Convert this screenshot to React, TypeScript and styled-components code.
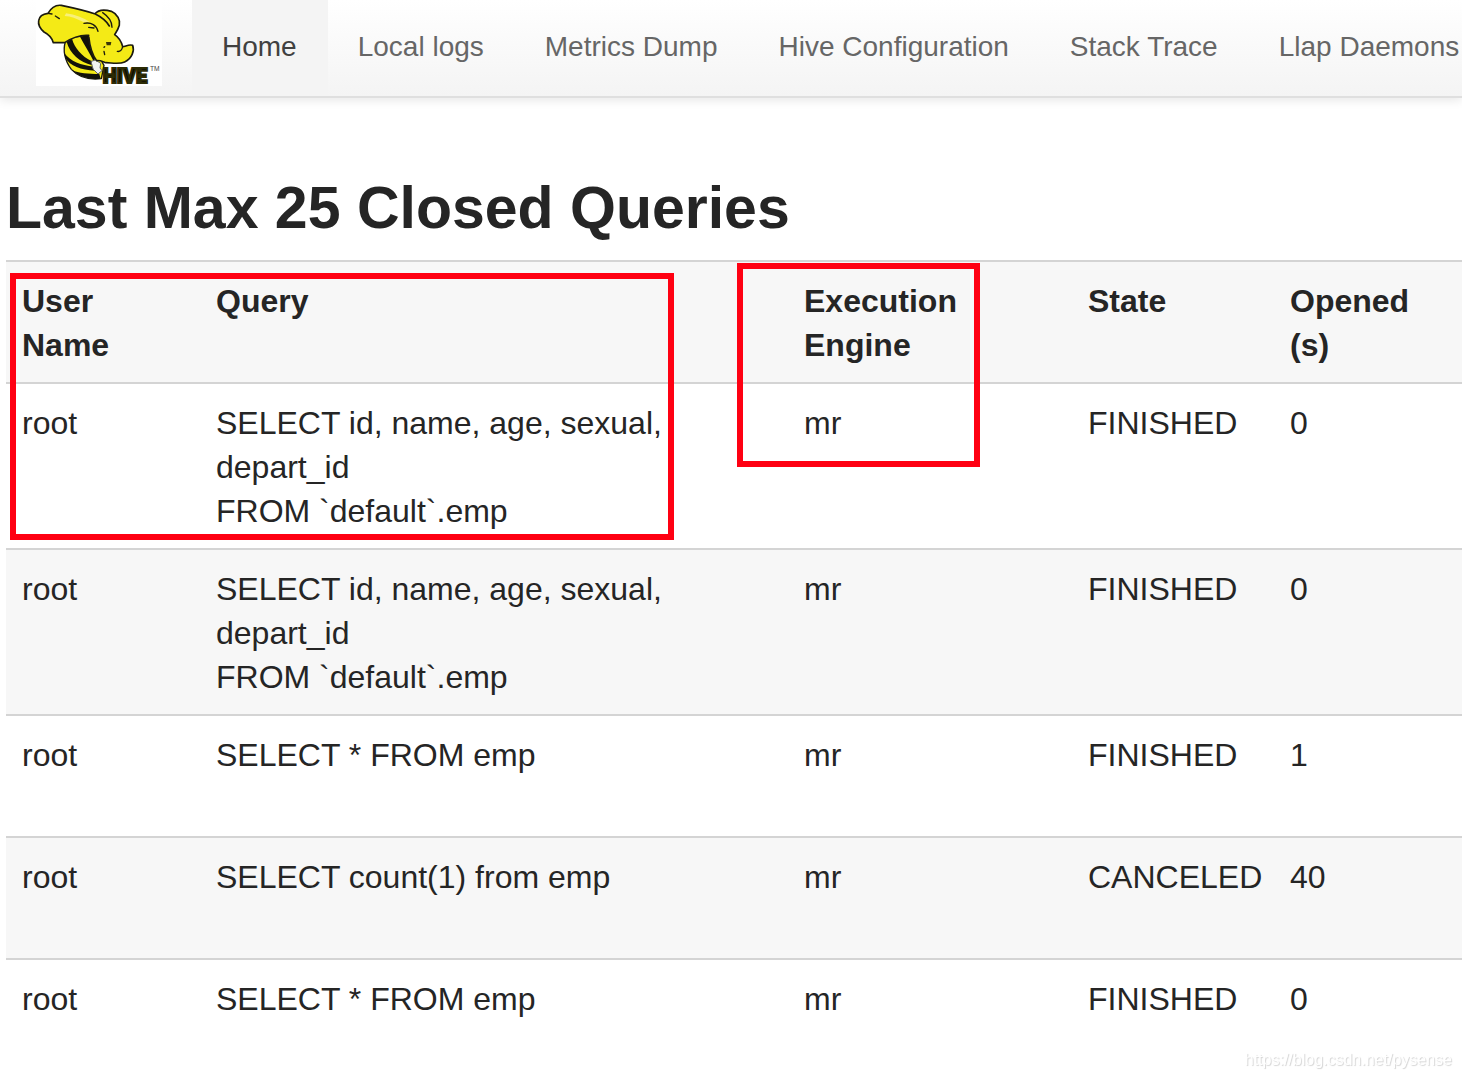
import React from "react";
import styled, { createGlobalStyle } from "styled-components";

const GlobalStyle = createGlobalStyle`
  * { box-sizing: border-box; }
  body {
    margin: 0;
    background: #ffffff;
    color: #252525;
    font-family: "Liberation Sans", Arial, sans-serif;
  }
`;

const Page = styled.div`
  height: 100vh;
  overflow-x: hidden;
  overflow-y: auto;
  scrollbar-width: none;
`;

const Navbar = styled.nav`
  display: flex;
  align-items: flex-start;
  gap: 30px;
  height: 98px;
  padding-left: 36px;
  border-bottom: 2px solid #dfdfdf;
  background: linear-gradient(#ffffff, #f4f4f4);
  box-shadow: 0 2px 10px rgba(0, 0, 0, 0.1);
`;

const Brand = styled.a`
  display: block;
  flex: none;
  width: 126px;
  height: 86px;
  background: #ffffff;

  svg { display: block; width: 100%; height: 100%; }
`;

const Menu = styled.ul`
  display: flex;
  flex: 1;
  min-width: 0;
  margin: 0;
  padding: 0;
  overflow: hidden;
  list-style: none;
`;

const MenuLink = styled.a<{ $active?: boolean }>`
  display: block;
  padding: 27px 31px 29px 30px;
  font-size: 28px;
  line-height: 40px;
  white-space: nowrap;
  text-decoration: none;
  color: ${(p) => (p.$active ? "#404040" : "#666666")};
  background: ${(p) => (p.$active ? "#f4f4f4" : "transparent")};
`;

const Main = styled.main`
  padding: 70px 0 0 6px;
`;

const Title = styled.h1`
  margin: 0 0 12px;
  font-size: 59px;
  line-height: 80px;
  font-weight: bold;
`;

const TableArea = styled.div`
  position: relative;
`;

const Table = styled.table`
  width: 100%;
  table-layout: fixed;
  border-collapse: separate;
  border-spacing: 0;
  font-size: 32px;
  line-height: 44px;
  text-align: left;
`;

const Col = styled.col<{ $width?: number }>`
  width: ${(p) => (p.$width ? `${p.$width}px` : "auto")};
`;

const Row = styled.tr<{ $shaded?: boolean }>`
  background: ${(p) => (p.$shaded ? "#f7f7f7" : "#ffffff")};
`;

const HeadCell = styled.th`
  padding: 17px 16px 15px;
  border-top: 2px solid #d4d4d4;
  vertical-align: top;
`;

const Cell = styled.td`
  padding: 17px 16px 15px;
  border-top: 2px solid #d4d4d4;
  vertical-align: top;
  white-space: nowrap;
`;

const Statement = styled.div`
  min-height: 88px;
  white-space: pre-wrap;
`;

const Highlight = styled.div<{ $x: number; $y: number; $w: number; $h: number }>`
  position: absolute;
  left: ${(p) => p.$x}px;
  top: ${(p) => p.$y}px;
  width: ${(p) => p.$w}px;
  height: ${(p) => p.$h}px;
  border: 6px solid #ff0012;
  pointer-events: none;
`;

const Watermark = styled.div`
  position: fixed;
  right: 10px;
  bottom: 8px;
  font-size: 16px;
  line-height: 20px;
  color: #ffffff;
  text-shadow: 1px 1px 1px #d4d4d4;
`;

const links = ["Home", "Local logs", "Metrics Dump", "Hive Configuration", "Stack Trace", "Llap Daemons"];

const headings: [string, string?][] = [
  ["User", "Name"],
  ["Query"],
  ["Execution", "Engine"],
  ["State"],
  ["Opened", "(s)"],
];

const empQuery = "SELECT id, name, age, sexual, depart_id\nFROM `default`.emp";

const queries = [
  { user: "root", query: empQuery, engine: "mr", state: "FINISHED", opened: 0 },
  { user: "root", query: empQuery, engine: "mr", state: "FINISHED", opened: 0 },
  { user: "root", query: "SELECT * FROM emp", engine: "mr", state: "FINISHED", opened: 1 },
  { user: "root", query: "SELECT count(1) from emp", engine: "mr", state: "CANCELED", opened: 40 },
  { user: "root", query: "SELECT * FROM emp", engine: "mr", state: "FINISHED", opened: 0 },
];

function HiveLogo() {
  return (
    <svg viewBox="18 0 378 258" role="img" aria-label="Hive">
      <g strokeLinejoin="round" strokeLinecap="round">
        <path
          d="M106 126 C98 150 104 182 124 208 C146 232 180 240 214 236 L222 196 L196 150 L172 106 L128 112 Z"
          fill="#f4ea16"
          stroke="#1b1a10"
          strokeWidth="4"
        />
        <g fill="#12110a">
          <path d="M150 110 L178 104 L184 136 L202 152 L192 186 C180 160 164 136 150 110 Z" />
          <path d="M110 126 L126 116 C134 144 154 168 186 184 L186 196 C150 186 120 162 110 126 Z" />
          <path d="M103 160 C122 184 152 196 192 200 L196 212 C152 210 120 198 106 174 Z" />
          <path d="M126 210 C146 220 176 222 208 222 L212 236 C176 240 146 230 126 210 Z" />
        </g>
        <path d="M184 184 L196 180 L212 190 L210 204 L216 212 L204 222 L190 208 Z" fill="#f2f2f2" stroke="#666666" strokeWidth="3" />
        <path
          d="M194 42 C204 30 224 28 244 34 C262 42 272 60 268 76 C264 90 258 98 254 104 C266 112 274 124 278 140 C286 140 296 132 308 136 C314 152 306 176 284 186 C266 194 244 188 228 188 C216 184 208 180 200 182 C186 164 180 146 176 108 L150 80 Z"
          fill="#f4ea16"
          stroke="#1b1a10"
          strokeWidth="5"
        />
        <path
          d="M26 62 C28 48 36 42 54 40 C64 22 78 14 94 16 C132 24 168 32 196 42 C220 54 236 72 244 96 L232 124 L206 146 L176 106 C152 104 128 112 104 128 L70 128 C66 114 54 102 42 96 C28 84 24 74 26 62 Z"
          fill="#f4ea16"
        />
        <path
          d="M176 106 C152 104 128 112 104 128 L70 128 C66 114 54 102 42 96 C28 84 24 74 26 62 C28 48 36 42 54 40 C64 22 78 14 94 16 C132 24 168 32 196 42 C216 52 230 64 238 78"
          fill="none"
          stroke="#1b1a10"
          strokeWidth="5"
        />
        <path d="M108 40 C136 44 160 54 180 66 L160 66 C140 56 122 48 104 48 Z" fill="#f8f07a" />
        <g fill="none" stroke="#1b1a10" strokeWidth="4">
          <path d="M54 40 L66 42 M76 48 L88 56" />
          <path d="M162 70 C184 66 200 76 204 94" />
          <path d="M176 82 L192 84" />
          <path d="M218 38 C236 50 246 64 246 82" />
          <path d="M224 140 L222 142" />
          <path d="M222 154 L224 164" />
          <path d="M262 154 C270 156 276 150 278 140" />
        </g>
        <path d="M228 126 L244 126 L242 136 L230 136 Z" fill="#3a3608" />
      </g>
      <text
        x="218"
        y="248"
        fontFamily="Roboto, 'Liberation Sans', sans-serif"
        fontWeight="900"
        fontSize="60"
        fill="#0c0c06"
        stroke="#2c2b04"
        strokeWidth="6"
      >
        HIVE
      </text>
      <text x="360" y="213" fontFamily="'Liberation Sans', sans-serif" fontSize="20" fill="#444444">
        TM
      </text>
    </svg>
  );
}

export default function App() {
  return (
    <>
      <GlobalStyle />
      <Page>
        <Navbar>
          <Brand href="#">
            <HiveLogo />
          </Brand>
          <Menu>
            {links.map((label, i) => (
              <li key={label}>
                <MenuLink href="#" $active={i === 0}>
                  {label}
                </MenuLink>
              </li>
            ))}
          </Menu>
        </Navbar>
        <Main>
          <Title>Last Max 25 Closed Queries</Title>
          <TableArea>
            <Table>
              <colgroup>
                <Col $width={194} />
                <Col $width={588} />
                <Col $width={284} />
                <Col $width={202} />
                <Col />
              </colgroup>
              <thead>
                <Row $shaded>
                  {headings.map(([first, second]) => (
                    <HeadCell key={first} scope="col">
                      {first}
                      {second && (
                        <>
                          <br />
                          {second}
                        </>
                      )}
                    </HeadCell>
                  ))}
                </Row>
              </thead>
              <tbody>
                {queries.map((q, i) => (
                  <Row key={i} $shaded={i % 2 === 1}>
                    <Cell>{q.user}</Cell>
                    <Cell>
                      <Statement>{q.query}</Statement>
                    </Cell>
                    <Cell>{q.engine}</Cell>
                    <Cell>{q.state}</Cell>
                    <Cell>{q.opened}</Cell>
                  </Row>
                ))}
              </tbody>
            </Table>
            <Highlight $x={4} $y={13} $w={664} $h={267} />
            <Highlight $x={731} $y={3} $w={243} $h={204} />
          </TableArea>
        </Main>
        <Watermark>https://blog.csdn.net/pysense</Watermark>
      </Page>
    </>
  );
}
